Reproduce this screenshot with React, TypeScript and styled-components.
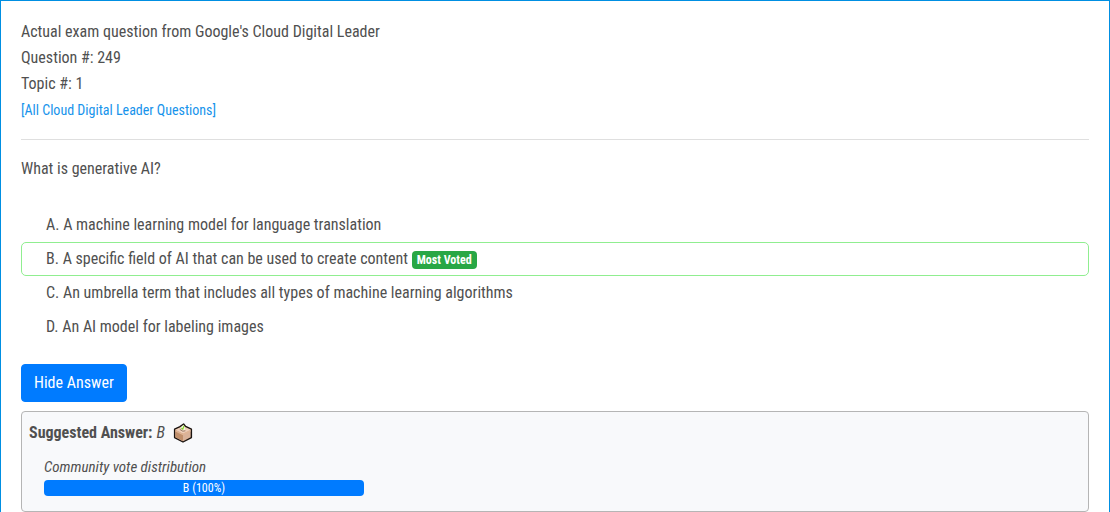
import React from "react";
import styled, { createGlobalStyle, css } from "styled-components";

const GlobalStyle = createGlobalStyle`
  *, *::before, *::after { box-sizing: border-box; }
  body {
    margin: 0;
    background: #fff;
    color: #505050;
    font-family: "Roboto Condensed", "Liberation Sans Narrow", Roboto, sans-serif;
    font-size: 16px;
    line-height: 26px;
  }
`;

const Card = styled.main`
  border: 1px solid #008fe2;
  border-bottom: 0;
  padding: 18px 20px 0;
`;

const QuestionHeader = styled.header`
  padding-bottom: 16px;
  border-bottom: 1px solid #dfdfdf;
`;

const HeaderLine = styled.div``;

const AllQuestionsLink = styled.a`
  color: #1693eb;
  font-size: 14px;
  text-decoration: none;
`;

const QuestionText = styled.p`
  margin: 16px 0 26px;
`;

const ChoiceList = styled.ul`
  list-style: none;
  margin: 0 0 20px;
  padding: 0;
`;

const Choice = styled.li<{ $voted?: boolean }>`
  padding: 3px 24px;
  border: 1px solid transparent;
  border-radius: 5px;
  ${(p) => p.$voted && css`border-color: #90ee90;`}
`;

const Badge = styled.span`
  display: inline-block;
  padding: 3px 5px;
  border-radius: 4px;
  background: #28a745;
  color: #fff;
  font-size: 12px;
  font-weight: 700;
  line-height: 12px;
`;

const AnswerButton = styled.button`
  display: block;
  padding: 5px 12px;
  border: 1px solid #007bff;
  border-radius: 4px;
  background: #007bff;
  color: #fff;
  font: inherit;
  cursor: pointer;
`;

const AnswerPanel = styled.section`
  margin-top: 9px;
  padding: 8px 7px 15px;
  border: 1px solid #b5b5b5;
  border-radius: 4px;
  background: #f8f9fb;
`;

const SuggestedAnswer = styled.div`
  display: flex;
  align-items: center;
  gap: 4px;
`;

const BallotIcon = styled.svg`
  width: 20px;
  height: 20px;
  margin-left: 4px;
`;

const VoteDistribution = styled.div`
  margin-top: 8px;
  padding-left: 15px;
`;

const VoteTitle = styled.div`
  font-size: 15px;
  font-style: italic;
`;

const VoteBar = styled.div`
  width: 320px;
  max-width: 100%;
  border-radius: 4px;
  background: #007bff;
  color: #fff;
  font-size: 12px;
  line-height: 16px;
  text-align: center;
`;

const choices = [
  { letter: "A", text: "A machine learning model for language translation" },
  { letter: "B", text: "A specific field of AI that can be used to create content", voted: true },
  { letter: "C", text: "An umbrella term that includes all types of machine learning algorithms" },
  { letter: "D", text: "An AI model for labeling images" },
];

export default function App() {
  return (
    <>
      <GlobalStyle />
      <Card>
        <QuestionHeader>
          <HeaderLine>Actual exam question from Google's Cloud Digital Leader</HeaderLine>
          <HeaderLine>Question #: 249</HeaderLine>
          <HeaderLine>Topic #: 1</HeaderLine>
          <HeaderLine>
            <AllQuestionsLink href="#all">[All Cloud Digital Leader Questions]</AllQuestionsLink>
          </HeaderLine>
        </QuestionHeader>
        <QuestionText>What is generative AI?</QuestionText>
        <ChoiceList>
          {choices.map((c) => (
            <Choice key={c.letter} $voted={c.voted}>
              {c.letter}. {c.text} {c.voted && <Badge>Most Voted</Badge>}
            </Choice>
          ))}
        </ChoiceList>
        <AnswerButton type="button">Hide Answer</AnswerButton>
        <AnswerPanel>
          <SuggestedAnswer>
            <strong>Suggested Answer:</strong>
            <em>B</em>
            <BallotIcon viewBox="0 0 20 20" aria-hidden="true">
              <path d="M1.6 6.2 L7 3.6 L10.6 1 L12.6 3.4 L18.4 6.2 V14.6 L10 19 L1.6 14.6 Z" fill="#d9b299" stroke="#1c1511" strokeWidth="1.4" strokeLinejoin="round" />
              <path d="M2.4 6.8 L10 3.4 L17.6 6.8 L10 10.6 Z" fill="#efcfb9" />
              <path d="M2.4 7.2 L10 11 V18.1 L2.4 14.2 Z" fill="#c08f6b" />
              <path d="M2.4 7 L10 10.8 L17.6 7 V8.4 L10 12.2 L2.4 8.4 Z" fill="#dfb495" />
              <path d="M7.6 4.4 L10.6 1.8 L12.4 6.4 L10 7.6 Z" fill="#f6fbe8" />
              <path d="M8.4 5 L9.8 6.2 L11 2.8" fill="none" stroke="#86d32e" strokeWidth="1.2" />
              <path d="M6.8 6.4 L9.8 8.2 L12.4 7.8" fill="none" stroke="#806553" strokeWidth="0.8" />
            </BallotIcon>
          </SuggestedAnswer>
          <VoteDistribution>
            <VoteTitle>Community vote distribution</VoteTitle>
            <VoteBar>B (100%)</VoteBar>
          </VoteDistribution>
        </AnswerPanel>
      </Card>
    </>
  );
}
